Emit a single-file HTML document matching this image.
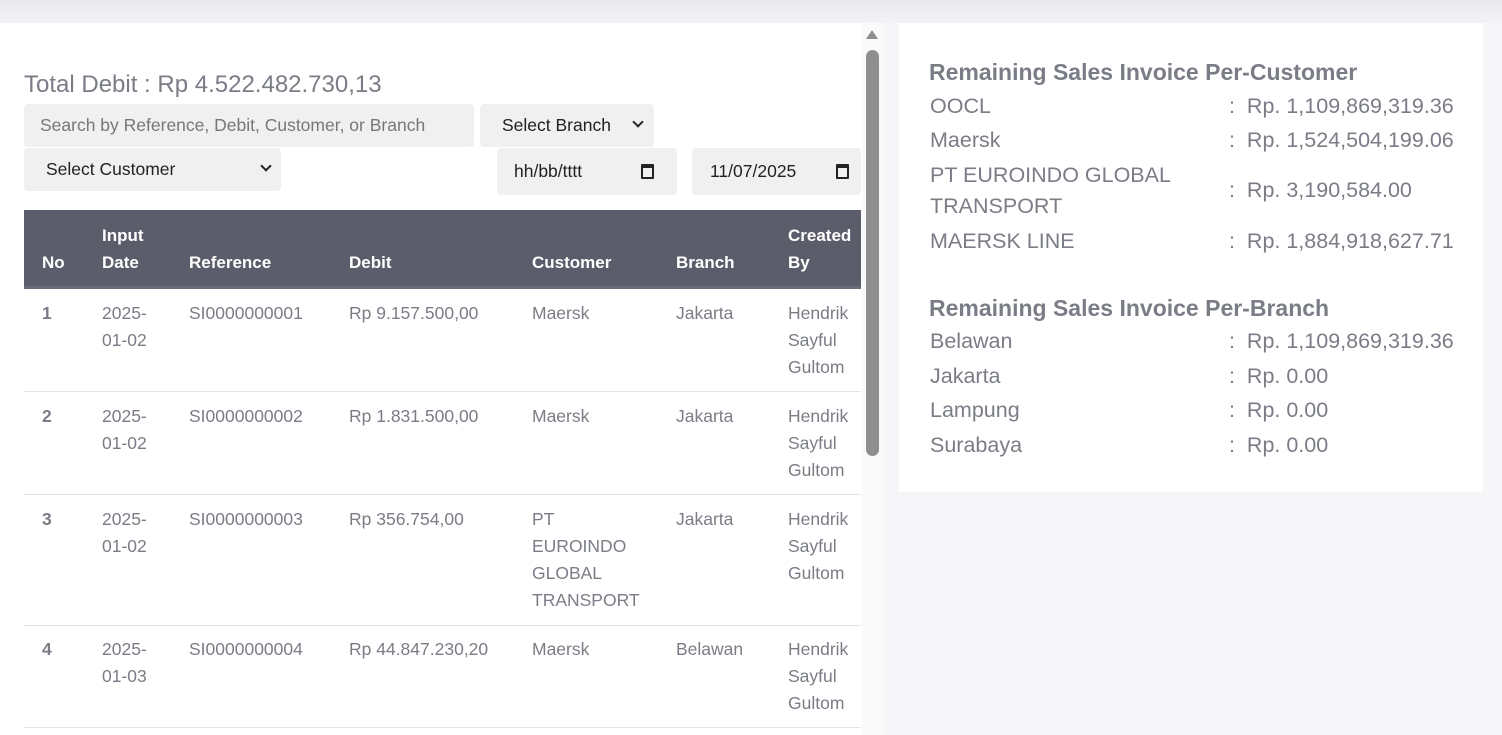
<!DOCTYPE html>
<html><head><meta charset="utf-8">
<style>
*{box-sizing:border-box;margin:0;padding:0}
body{width:1502px;height:735px;overflow:hidden;background:#f6f6f9;font-family:"Liberation Sans",sans-serif;position:relative}
.top{position:absolute;left:0;top:0;width:1502px;height:23px;background:linear-gradient(#e8e8ec,#f3f3f6)}
.left{position:absolute;left:0;top:23px;width:862px;height:712px;background:#fff}
.sb{position:absolute;left:862px;top:23px;width:22px;height:712px;background:#fafafa}
.thumb{position:absolute;left:866px;top:50px;width:13px;height:406px;background:#8f8f8f;border-radius:7px}
.arrow{position:absolute;left:866px;top:30px;width:0;height:0;border-left:6px solid transparent;border-right:6px solid transparent;border-bottom:9px solid #8f8f8f}
.t{position:absolute;white-space:nowrap}
.total{left:24px;top:71px;font-size:24px;color:#7a7d86}
.box{position:absolute;background:#f0f0f0;border-radius:4px;font-size:17.5px;color:#222;display:flex;align-items:center;white-space:nowrap}
.chev{position:absolute;width:8px;height:8px;border-right:2px solid #222;border-bottom:2px solid #222;transform:rotate(45deg)}
.cal{position:absolute;width:13px;height:15px;border:2px solid #222;border-top-width:4px;border-radius:1px}
.thead{position:absolute;left:24px;top:210px;width:837px;height:79px;background:#5c5d6b;border-bottom:3px solid #6b6c7a}
.h{position:absolute;color:#fff;font-weight:bold;font-size:17px;line-height:27px;white-space:nowrap}
.c{position:absolute;color:#7a7d86;font-size:17.5px;line-height:27px;white-space:nowrap}
.b{font-weight:bold}
.line{position:absolute;left:24px;width:837px;height:1px;background:#e4e4ea}
.card{position:absolute;left:899px;top:23px;width:584px;height:469px;background:#fff}
.rh{position:absolute;left:929px;font-size:23px;font-weight:bold;color:#7a7d86;white-space:nowrap}
.rl{position:absolute;left:930px;font-size:21.5px;color:#7a7d86;white-space:nowrap}
.rv{position:absolute;left:1229px;font-size:21.5px;color:#7a7d86;white-space:nowrap}
</style></head><body>
<div class="top"></div>
<div class="left"></div>
<div class="sb"></div><div class="arrow"></div><div class="thumb"></div>

<div class="t total">Total Debit : Rp 4.522.482.730,13</div>
<div class="box" style="left:24px;top:104px;width:450px;height:43px;padding-left:16px;color:#777">Search by Reference, Debit, Customer, or Branch</div>
<div class="box" style="left:480px;top:104px;width:174px;height:43px;padding-left:22px">Select Branch<span class="chev" style="left:154px;top:14px"></span></div>
<div class="box" style="left:24px;top:148px;width:257px;height:43px;padding-left:22px">Select Customer<span class="chev" style="left:238px;top:14px"></span></div>
<div class="box" style="left:497px;top:148px;width:180px;height:47px;padding-left:17px">hh/bb/tttt<span class="cal" style="left:144px;top:16px"></span></div>
<div class="box" style="left:692px;top:148px;width:169px;height:47px;padding-left:18px">11/07/2025<span class="cal" style="left:144px;top:16px"></span></div>

<div class="thead"></div>
<div class="h" style="left:42px;top:249px">No</div>
<div class="h" style="left:102px;top:222px">Input<br>Date</div>
<div class="h" style="left:189px;top:249px">Reference</div>
<div class="h" style="left:349px;top:249px">Debit</div>
<div class="h" style="left:532px;top:249px">Customer</div>
<div class="h" style="left:676px;top:249px">Branch</div>
<div class="h" style="left:788px;top:222px">Created<br>By</div>

<div class="c b" style="left:42px;top:300px">1</div>
<div class="c" style="left:102px;top:300px">2025-<br>01-02</div>
<div class="c" style="left:189px;top:300px">SI0000000001</div>
<div class="c" style="left:349px;top:300px">Rp 9.157.500,00</div>
<div class="c" style="left:532px;top:300px">Maersk</div>
<div class="c" style="left:676px;top:300px">Jakarta</div>
<div class="c" style="left:788px;top:300px">Hendrik<br>Sayful<br>Gultom</div>
<div class="line" style="top:391px"></div>

<div class="c b" style="left:42px;top:403px">2</div>
<div class="c" style="left:102px;top:403px">2025-<br>01-02</div>
<div class="c" style="left:189px;top:403px">SI0000000002</div>
<div class="c" style="left:349px;top:403px">Rp 1.831.500,00</div>
<div class="c" style="left:532px;top:403px">Maersk</div>
<div class="c" style="left:676px;top:403px">Jakarta</div>
<div class="c" style="left:788px;top:403px">Hendrik<br>Sayful<br>Gultom</div>
<div class="line" style="top:494px"></div>

<div class="c b" style="left:42px;top:506px">3</div>
<div class="c" style="left:102px;top:506px">2025-<br>01-02</div>
<div class="c" style="left:189px;top:506px">SI0000000003</div>
<div class="c" style="left:349px;top:506px">Rp 356.754,00</div>
<div class="c" style="left:532px;top:506px">PT<br>EUROINDO<br>GLOBAL<br>TRANSPORT</div>
<div class="c" style="left:676px;top:506px">Jakarta</div>
<div class="c" style="left:788px;top:506px">Hendrik<br>Sayful<br>Gultom</div>
<div class="line" style="top:625px"></div>

<div class="c b" style="left:42px;top:636px">4</div>
<div class="c" style="left:102px;top:636px">2025-<br>01-03</div>
<div class="c" style="left:189px;top:636px">SI0000000004</div>
<div class="c" style="left:349px;top:636px">Rp 44.847.230,20</div>
<div class="c" style="left:532px;top:636px">Maersk</div>
<div class="c" style="left:676px;top:636px">Belawan</div>
<div class="c" style="left:788px;top:636px">Hendrik<br>Sayful<br>Gultom</div>
<div class="line" style="top:727px"></div>

<div class="card"></div>
<div class="rh" style="top:59px">Remaining Sales Invoice Per-Customer</div>
<div class="rl" style="top:94px">OOCL</div><div class="rv" style="top:94px">:&nbsp; Rp. 1,109,869,319.36</div>
<div class="rl" style="top:128px">Maersk</div><div class="rv" style="top:128px">:&nbsp; Rp. 1,524,504,199.06</div>
<div class="rl" style="top:160px;line-height:31px">PT EUROINDO GLOBAL<br>TRANSPORT</div><div class="rv" style="top:178px">:&nbsp; Rp. 3,190,584.00</div>
<div class="rl" style="top:229px">MAERSK LINE</div><div class="rv" style="top:229px">:&nbsp; Rp. 1,884,918,627.71</div>

<div class="rh" style="top:295px">Remaining Sales Invoice Per-Branch</div>
<div class="rl" style="top:329px">Belawan</div><div class="rv" style="top:329px">:&nbsp; Rp. 1,109,869,319.36</div>
<div class="rl" style="top:364px">Jakarta</div><div class="rv" style="top:364px">:&nbsp; Rp. 0.00</div>
<div class="rl" style="top:398px">Lampung</div><div class="rv" style="top:398px">:&nbsp; Rp. 0.00</div>
<div class="rl" style="top:433px">Surabaya</div><div class="rv" style="top:433px">:&nbsp; Rp. 0.00</div>
</body></html>
